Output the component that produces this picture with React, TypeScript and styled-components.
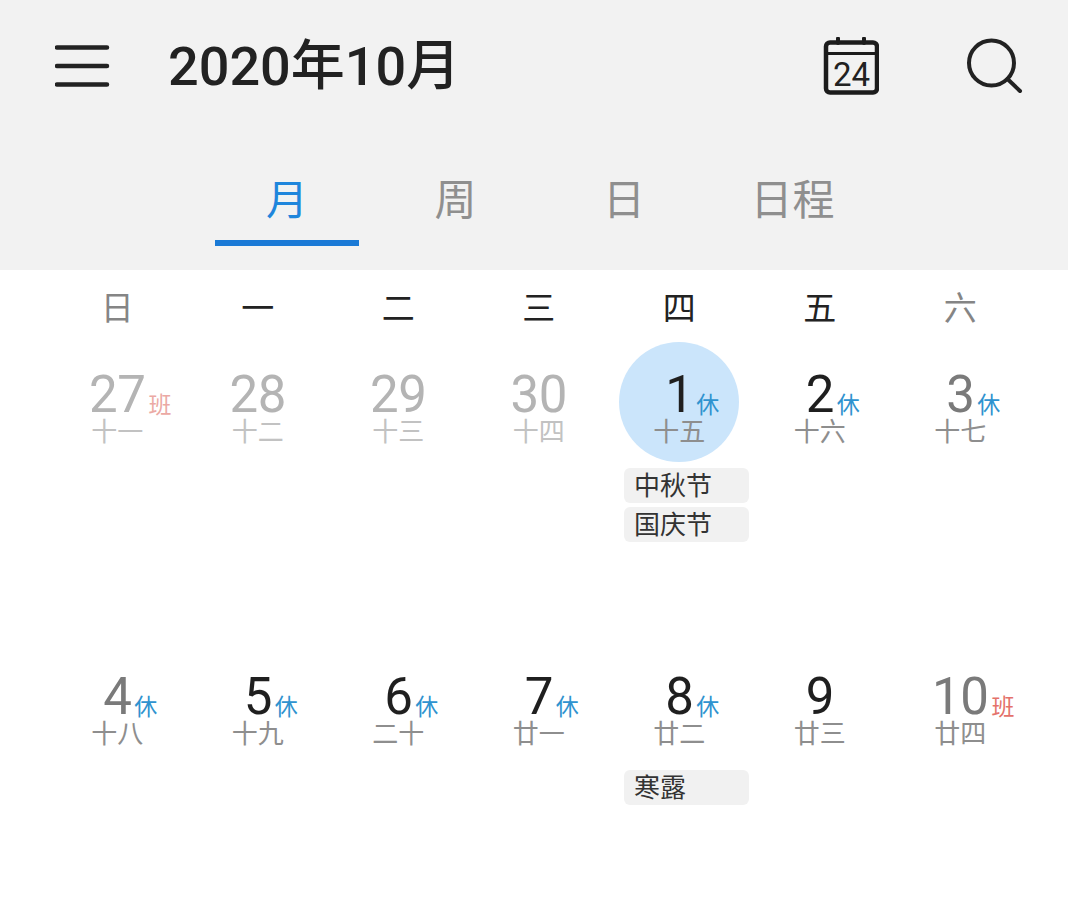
import { createGlobalStyle, styled } from 'styled-components';

type Tone = 'muted' | 'weekend' | 'normal';

type DayType = {
  date: number;
  lunar: string;
  tone: Tone;
  tag?: '休' | '班';
  today?: boolean;
  events?: string[];
};

const TABS = ['月', '周', '日', '日程'];
const WEEK_DAYS = ['日', '一', '二', '三', '四', '五', '六'];

const DAYS: DayType[] = [
  { date: 27, lunar: '十一', tone: 'muted', tag: '班' },
  { date: 28, lunar: '十二', tone: 'muted' },
  { date: 29, lunar: '十三', tone: 'muted' },
  { date: 30, lunar: '十四', tone: 'muted' },
  { date: 1, lunar: '十五', tone: 'normal', tag: '休', today: true, events: ['中秋节', '国庆节'] },
  { date: 2, lunar: '十六', tone: 'normal', tag: '休' },
  { date: 3, lunar: '十七', tone: 'weekend', tag: '休' },
  { date: 4, lunar: '十八', tone: 'weekend', tag: '休' },
  { date: 5, lunar: '十九', tone: 'normal', tag: '休' },
  { date: 6, lunar: '二十', tone: 'normal', tag: '休' },
  { date: 7, lunar: '廿一', tone: 'normal', tag: '休' },
  { date: 8, lunar: '廿二', tone: 'normal', tag: '休', events: ['寒露'] },
  { date: 9, lunar: '廿三', tone: 'normal' },
  { date: 10, lunar: '廿四', tone: 'weekend', tag: '班' },
];

const DATE_COLORS: Record<Tone, string> = {
  muted: '#b4b4b4',
  weekend: '#7a7a7a',
  normal: '#1f1f1f',
};

const LUNAR_COLORS: Record<Tone, string> = {
  muted: '#c2c2c2',
  weekend: '#8e8e8e',
  normal: '#8e8e8e',
};

function tagColor(tag: string, tone: Tone) {
  if (tag === '休') return '#2f93cf';
  return tone === 'muted' ? '#eba9a4' : '#e4716a';
}

export default function App() {
  return (
    <Page>
      <GlobalStyle />
      <Header>
        <TopBar>
          <MenuButton>
            <svg width="56" height="48" viewBox="0 0 56 48" fill="none" stroke="#222" strokeWidth="4.500" strokeLinecap="round">
              <path d="M2 5.500H52M2 24H52M2 42.500H52" />
            </svg>
          </MenuButton>
          <Title>2020年10月</Title>
          <Actions>
            <svg width="56" height="58" viewBox="0 0 56 58" fill="none" stroke="#1c1c1c">
              <rect x="3" y="5.500" width="51" height="50" rx="4" strokeWidth="4.500" />
              <path d="M3 16.500H54" strokeWidth="3" />
              <path d="M15 1.500V6M41 1.500V6" strokeWidth="4" strokeLinecap="round" />
              <IconDate x="28.500" y="49" textAnchor="middle">24</IconDate>
            </svg>
            <svg width="58" height="58" viewBox="0 0 58 58" fill="none" stroke="#222" strokeWidth="4" strokeLinecap="round">
              <circle cx="25.500" cy="26" r="22.500" />
              <path d="M41.500 42L54 54" />
            </svg>
          </Actions>
        </TopBar>
        <Tabs>
          {TABS.map((tab, index) => (
            <Tab key={tab} active={index === 0}>
              {tab}
            </Tab>
          ))}
        </Tabs>
      </Header>
      <WeekRow>
        {WEEK_DAYS.map((day, index) => (
          <WeekDay key={day} weekend={index === 0 || index === 6}>
            {day}
          </WeekDay>
        ))}
      </WeekRow>
      <Month>
        {DAYS.map((day) => (
          <Cell key={day.date}>
            <DayCircle today={day.today}>
              <DateNumber tone={day.tone}>
                {day.date}
                {day.tag && <Tag color={tagColor(day.tag, day.tone)}>{day.tag}</Tag>}
              </DateNumber>
              <Lunar tone={day.tone}>{day.lunar}</Lunar>
            </DayCircle>
            {day.events && (
              <Events>
                {day.events.map((event) => (
                  <EventChip key={event}>{event}</EventChip>
                ))}
              </Events>
            )}
          </Cell>
        ))}
      </Month>
    </Page>
  );
}

const GlobalStyle = createGlobalStyle`
  html, body {
    margin: 0;
    background: #fff;
  }

  body {
    font-family: Roboto, "Noto Sans CJK SC", sans-serif;
  }
`;

const Page = styled.div`
  width: 1068px;
  height: 904px;
  overflow: hidden;
  background: #fff;
`;

const Header = styled.header`
  height: 270px;
  background: #f2f2f2;
`;

const TopBar = styled.div`
  display: flex;
  align-items: center;
  height: 132px;
  padding: 0 44px 0 55px;
`;

const MenuButton = styled.div`
  display: flex;
  width: 56px;
  height: 48px;
  margin-right: 57px;
`;

const Title = styled.h1`
  margin: 0 0 9px;
  font-size: 54px;
  font-weight: 500;
  color: #222;
`;

const Actions = styled.div`
  display: flex;
  align-items: center;
  gap: 87px;
  margin-left: auto;
`;

const IconDate = styled.text`
  font-family: Roboto, sans-serif;
  font-size: 33px;
  font-weight: 400;
  fill: #222;
  stroke: none;
`;

const Tabs = styled.nav`
  display: flex;
  gap: 24.500px;
  padding-left: 215px;
`;

const Tab = styled.div<{ active?: boolean }>`
  width: 144px;
  height: 114px;
  box-sizing: border-box;
  padding-top: 41px;
  line-height: 56px;
  text-align: center;
  font-size: 42px;
  color: ${(p) => (p.active ? '#1f86dc' : '#8f8f8f')};
  border-bottom: 6px solid ${(p) => (p.active ? '#1b7ad6' : 'transparent')};
`;

const WeekRow = styled.div`
  display: grid;
  grid-template-columns: repeat(7, 140.500px);
  height: 72px;
  padding-left: 47px;
  align-items: center;
`;

const WeekDay = styled.div<{ weekend?: boolean }>`
  text-align: center;
  font-size: 33px;
  color: ${(p) => (p.weekend ? '#858585' : '#222')};
`;

const Month = styled.div`
  display: grid;
  grid-template-columns: repeat(7, 140.500px);
  grid-auto-rows: 302px;
  padding-left: 47px;
`;

const Cell = styled.div`
  display: flex;
  flex-flow: column;
`;

const DayCircle = styled.div<{ today?: boolean }>`
  display: flex;
  flex-flow: column;
  align-items: center;
  flex: none;
  width: 120px;
  height: 120px;
  margin: 0 auto;
  padding-top: 30px;
  box-sizing: border-box;
  border-radius: 50%;
  background: ${(p) => (p.today ? '#cbe5fb' : 'transparent')};
`;

const DateNumber = styled.div<{ tone: Tone }>`
  position: relative;
  font-size: 51px;
  letter-spacing: -0.500px;
  line-height: 46px;
  color: ${(p) => DATE_COLORS[p.tone]};
`;

const Tag = styled.span<{ color: string }>`
  position: absolute;
  left: 100%;
  top: 19px;
  margin-left: 3px;
  font-size: 23px;
  letter-spacing: 0;
  line-height: 30px;
  white-space: nowrap;
  color: ${(p) => p.color};
`;

const Lunar = styled.div<{ tone: Tone }>`
  margin-top: 1px;
  font-size: 26px;
  line-height: 26px;
  color: ${(p) => LUNAR_COLORS[p.tone]};
`;

const Events = styled.div`
  display: flex;
  flex-flow: column;
  gap: 4px;
  margin: 6px 1px 0 15px;
`;

const EventChip = styled.div`
  height: 35px;
  padding-left: 10px;
  border-radius: 6px;
  background: #f1f1f1;
  font-size: 26px;
  line-height: 36px;
  color: #333;
`;
